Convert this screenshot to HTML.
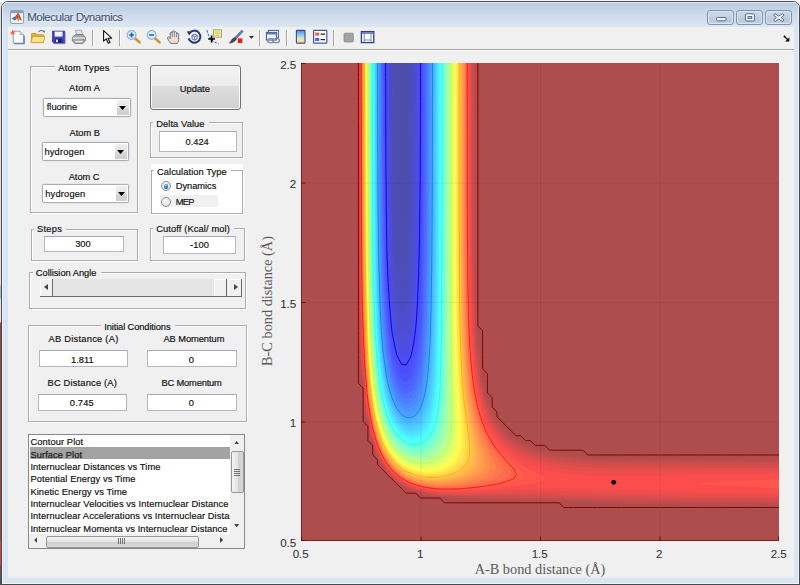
<!DOCTYPE html>
<html><head><meta charset="utf-8"><title>Molecular Dynamics</title>
<style>
html,body{margin:0;padding:0}
body{width:800px;height:585px;overflow:hidden;background:#e9e9ec;font-family:"Liberation Sans",sans-serif;position:relative}
#out{position:absolute;left:0;top:0;width:800px;height:585px;background:linear-gradient(#f4f4f6 0,#f4f4f6 2px,#e2e3e8 2px,#e2e3e8 284px,#a9b8d0 286px,#a9b8d0 298px,#e6e6ea 300px,#e6e6ea 322px,#9e4448 323px,#9e4448 540px,#dc4242 542px,#dc4242 564px,#6a5054 568px,#555 585px)}
#topbg{position:absolute;left:2px;top:0;width:798px;height:3px;background:#f6f6f8}
#botbg{position:absolute;left:0;top:583px;width:800px;height:2px;background:#4e4e50}
#win{position:absolute;left:1px;top:1px;width:797px;height:582px;border:1px solid #48484c;border-radius:7px 7px 0 0;background:#d9e5f2;box-shadow:inset 0 0 0 1px #eef4fb;overflow:hidden}
#cap{position:absolute;left:0;top:0;width:797px;height:24.5px;background:linear-gradient(#b9cae0 0,#c6d5e8 35%,#d4e0ef 70%,#dbe6f3 100%);box-shadow:inset 0 1px 0 #e6eef8,inset 1px 0 0 #e6eef8,inset -1px 0 0 #e6eef8}
#client{position:absolute;left:6px;top:24.5px;width:786px;height:551.5px;background:#f0f0f0}
#tbline{position:absolute;left:6px;top:47px;width:786px;height:1px;background:#a8a8a8;box-shadow:0 1px 0 #fafafa}
.t{position:absolute;white-space:nowrap;-webkit-text-stroke:.18px currentColor}
.pn{position:absolute;border:1px solid #adadad;box-shadow:1px 1px 0 #fff,inset 1px 1px 0 #fff}
.ed{position:absolute;background:#fff;border:1px solid #b4b8c0;border-top-color:#a6aab4}
.cb{position:absolute;background:#fff;border:1px solid #a9adb6;border-radius:1.5px;box-shadow:0 0 0 .5px #dcdde0}
.cbb{position:absolute;right:1px;top:1px;bottom:1px;width:11.5px;background:linear-gradient(#f0f0f0,#e4e4e4 50%,#d8d8d8 51%,#cecece)}
.cba{position:absolute;right:3.2px;top:7.2px}
.btn{position:absolute;border:1px solid #707070;border-radius:3px;background:linear-gradient(#f3f3f3 0,#ececec 46%,#dedede 47%,#d0d0d0 100%);box-shadow:inset 0 0 0 1px #fafafa}
.rd{position:absolute;width:9px;height:9px;border-radius:50%;border:1px solid #8a8f98;background:radial-gradient(circle at 40% 35%,#fdfdfd 0,#e4e6e8 60%,#c9ccd0 100%);box-sizing:border-box;width:10.4px;height:10.4px}
.rd i{position:absolute;left:2.1px;top:2.1px;width:4.6px;height:4.6px;border-radius:50%;background:radial-gradient(circle at 40% 30%,#7fd0f2 0,#1c78b8 55%,#0c3a66 100%)}
.sl{position:absolute;background:#e4e4e4;border-bottom:1.2px solid #6a6a6a;box-sizing:border-box}
.slb{position:absolute;top:0;height:16.7px;background:#f0f0f0;border-right:1px solid #6a6a6a;box-shadow:inset 1px 1px 0 #fff;box-sizing:border-box}
.lb{position:absolute;background:#fff;border:1px solid #828790}
.thumb{position:absolute;border:1px solid #979797;border-radius:2px;background:linear-gradient(90deg,#f4f4f4,#e3e3e3 50%,#cfcfcf 51%,#d8d8d8)}
.thumbh{position:absolute;border:1px solid #979797;border-radius:2px;background:linear-gradient(#f4f4f4,#e3e3e3 50%,#cfcfcf 51%,#d8d8d8)}
.tk{font-size:11.6px;line-height:13px;color:#2e2e2e;-webkit-text-stroke:.05px currentColor}
.ax{font-family:"Liberation Serif",serif;font-size:14.3px;line-height:16px;color:#5a5a5a;-webkit-text-stroke:0}
.cbt{position:absolute;top:7.9px;height:12.9px;border:1px solid #8093b2;border-radius:3px;background:linear-gradient(#ccd9ea 0,#c3d1e5 48%,#b9c9df 52%,#c2d0e4 100%);box-shadow:inset 0 0 0 1px #dbe5f2}
.sep{position:absolute;top:30px;width:1px;height:16px;background:#a6a6a6;box-shadow:1px 0 0 #fbfbfb}
.ic{position:absolute;top:29px}
</style></head><body>
<div id="out"></div><div id="topbg"></div><div id="botbg"></div>
<div id="win">
<div id="cap"></div>
<!-- app icon -->
<svg style="position:absolute;left:7.7px;top:7.7px" width="14" height="14" viewBox="0 0 14 14">
<rect x=".5" y=".5" width="13" height="13" rx="1.5" fill="#f4f6f8" stroke="#93a0b2"/>
<rect x="1" y="1" width="12" height="2.2" fill="#7f9fc4"/>
<path d="M1.6,8.6L5.2,6.2 7.2,8.8 4.6,10.6Z" fill="#3f78b8"/>
<path d="M5.2,6.2L8.4,2.6 9.6,5.5 11.8,10.8 9.6,9.2 8.2,11.4 7.2,8.8Z" fill="#d8501c"/>
<path d="M8.4,2.6L9.6,5.5 11.8,10.8 10.3,8.4Z" fill="#8a2a10"/>
<path d="M7.2,8.8L8.2,11.4 9.6,9.2 8.6,7.3Z" fill="#f2a23c"/>
</svg>
<span class="t" id="t_title" style="left:25.2px;top:7.2px;font-size:11.6px;line-height:16px;color:#46506a;letter-spacing:-0.5px;-webkit-text-stroke:.06px currentColor;text-shadow:0 0 3px #f4f8fc">Molecular Dynamics</span>
<!-- caption buttons -->
<div class="cbt" style="left:704.5px;width:25.5px"><svg width="26" height="14" style="position:absolute;left:0;top:0"><rect x="8.6" y="6.6" width="9.4" height="3.2" rx="1" fill="#fff" stroke="#55637a" stroke-width="1"/></svg></div>
<div class="cbt" style="left:733.8px;width:25.2px"><svg width="26" height="14" style="position:absolute;left:0;top:0"><rect x="8.4" y="2.8" width="9" height="7.2" rx="1" fill="#fff" stroke="#55637a" stroke-width="1"/><rect x="11" y="5.4" width="3.8" height="2.2" fill="#b6c5db" stroke="#55637a" stroke-width=".9"/></svg></div>
<div class="cbt" style="left:763px;width:25.3px"><svg width="26" height="14" style="position:absolute;left:0;top:0"><path d="M9,2.6L12.8,5.2 16.6,2.6 18,4.2 15,6.6 18,9 16.6,10.6 12.8,8 9,10.6 7.6,9 10.6,6.6 7.6,4.2Z" fill="#fff" stroke="#55637a" stroke-width="1" stroke-linejoin="round"/></svg></div>
<div id="client"></div>
<div id="tbline"></div>
</div>
<!-- ===== toolbar icons (page coordinates) ===== -->
<svg class="ic" style="left:9px" width="18" height="16" viewBox="0 0 18 16"><!-- new -->
<path d="M4.2,2.2H11L14.6,5.6V14.2H4.2Z" fill="#fdfeff" stroke="#8aa0d0" stroke-width="1"/>
<path d="M5,14.8H15.2V6.4" fill="none" stroke="#5a6fb4" stroke-width="1.1"/>
<path d="M11,2.2V5.6H14.6" fill="#dfe8f6" stroke="#8aa0d0" stroke-width=".8"/>
<path d="M3.6,.6L4.3,2.5 6.3,1.6 5.1,3.5 6.8,4.6 4.8,4.7 4.6,6.7 3.5,5 1.6,6 2.5,4.1 .8,3.1 2.8,2.8Z" fill="#f0682c"/>
</svg>
<svg class="ic" style="left:30px" width="18" height="16" viewBox="0 0 18 16"><!-- open -->
<path d="M8.5,2.8C10,1 12.6,1 14,2.8" fill="none" stroke="#4a6ca8" stroke-width="1.1"/><path d="M12.6,1.2L15,2 14.2,4.2Z" fill="#4a6ca8"/>
<path d="M1.6,4.6H6L7.2,5.8H13.4V13.4H1.6Z" fill="#e4b53c" stroke="#b98a20" stroke-width=".8"/>
<path d="M.8,13.6L2.6,7.4H15L13.2,13.6Z" fill="#fbe38a" stroke="#c89c2a" stroke-width=".8"/>
</svg>
<svg class="ic" style="left:51px" width="18" height="16" viewBox="0 0 18 16"><!-- save -->
<path d="M1.6,2.2H13.6V14.2H2.8L1.6,13Z" fill="#3f3fc0" stroke="#28287e" stroke-width=".8"/>
<rect x="3.6" y="2.6" width="8" height="5" fill="#f2f4fb"/>
<rect x="4.4" y="9.8" width="6.4" height="4" fill="#22225a"/><rect x="5" y="10.6" width="2" height="2.6" fill="#e8e8f4"/>
<path d="M14.2,3V14.8H3.4" fill="none" stroke="#8d8dd8" stroke-width=".8"/>
</svg>
<svg class="ic" style="left:71px" width="18" height="16" viewBox="0 0 18 16"><!-- print -->
<path d="M4.4,1.2H10.2L11.6,6H5.6Z" fill="#cfe6fb" stroke="#7d97b8" stroke-width=".7"/>
<path d="M1.4,8.2L4.6,5.6H12L14.4,8.2V12L11.6,14.6H4.2L1.4,12Z" fill="#a9a9a9" stroke="#6f6f6f" stroke-width=".8"/>
<path d="M1.8,8.4H14V9.8H1.8Z" fill="#e6e6e6"/>
<path d="M3.2,11.4H12.6L11.2,13.8H4.6Z" fill="#f4f4f4" stroke="#8a8a8a" stroke-width=".6"/>
<rect x="11.4" y="10" width="1.4" height="1" fill="#3ea43e"/>
</svg>
<div class="sep" style="left:92px"></div>
<svg class="ic" style="left:101px" width="14" height="16" viewBox="0 0 14 16"><!-- pointer -->
<path d="M2.6,1.6V12.2L5.2,9.8 7.2,14.2 9,13.4 7,9.2H10.6Z" fill="#fff" stroke="#111" stroke-width="1.1" stroke-linejoin="round"/>
</svg>
<div class="sep" style="left:119px"></div>
<svg class="ic" style="left:124.5px" width="18" height="16" viewBox="0 0 18 16"><!-- zoom in -->
<path d="M9.2,8.6L14.6,13.4" stroke="#d98a2c" stroke-width="2.6" stroke-linecap="round"/>
<circle cx="6.6" cy="6" r="4.4" fill="#d6ecfb" stroke="#8fb2d6" stroke-width="1.2"/>
<path d="M4.2,6H9M6.6,3.6V8.4" stroke="#2c5ea8" stroke-width="1.5"/>
</svg>
<svg class="ic" style="left:145px" width="18" height="16" viewBox="0 0 18 16"><!-- zoom out -->
<path d="M9.2,8.6L14.6,13.4" stroke="#d98a2c" stroke-width="2.6" stroke-linecap="round"/>
<circle cx="6.6" cy="6" r="4.4" fill="#d6ecfb" stroke="#8fb2d6" stroke-width="1.2"/>
<path d="M4.2,6H9" stroke="#2c5ea8" stroke-width="1.5"/>
</svg>
<svg class="ic" style="left:165.5px" width="18" height="16" viewBox="0 0 18 16"><!-- pan -->
<path d="M4.6,14.4C3,12 1.6,10.2 1.4,8.6C1.8,7.4 3.2,8 4.2,9.6V4.2C4.4,2.8 6,2.8 6.2,4.2V2.8C6.4,1.4 8.2,1.4 8.4,2.8V3.6C8.6,2.2 10.4,2.4 10.6,3.8V5C10.9,3.8 12.6,4 12.7,5.4V10C12.6,12 12,13 11.4,14.4Z" fill="#f8dcc0" stroke="#4a6aa4" stroke-width=".9" stroke-linejoin="round"/>
<path d="M6.2,4.4V8M8.4,3.8V8M10.6,5V8.2" stroke="#4a6aa4" stroke-width=".7"/>
</svg>
<svg class="ic" style="left:186px" width="18" height="16" viewBox="0 0 18 16"><!-- rotate -->
<path d="M3.4,4.2A6,6 0 1 1 2.6,9.4" fill="none" stroke="#27396e" stroke-width="2"/>
<path d="M.8,2.2L6,2.6 3,6.6Z" fill="#27396e"/>
<path d="M6,6.4L8.6,5.2 11.2,6.4V9.8L8.6,11.2 6,9.8Z" fill="#e9eef8" stroke="#3a4e86" stroke-width=".8"/><path d="M6,6.4L8.6,7.6 11.2,6.4M8.6,7.6V11.2" fill="none" stroke="#3a4e86" stroke-width=".7"/>
</svg>
<svg class="ic" style="left:205.5px" width="18" height="16" viewBox="0 0 18 16"><!-- datacursor -->
<rect x="7.4" y=".8" width="8.2" height="7.4" fill="#f2eaa0" stroke="#a9a05a" stroke-width=".9"/>
<path d="M9,3H14M9,4.8H14M9,6.4H13" stroke="#c8c07a" stroke-width=".7"/>
<path d="M1,1.2C2.4,8.4 6.4,13 12.6,14.6" fill="none" stroke="#3a3ae0" stroke-width=".9" stroke-dasharray="2.4 1.2"/>
<path d="M5.6,6.6V13.4M2.2,10H9" stroke="#000" stroke-width="1.7"/>
</svg>
<svg class="ic" style="left:227.5px" width="18" height="16" viewBox="0 0 18 16"><!-- brush -->
<path d="M13.6,1.2L15.2,2.4 8.4,9.8 6.8,8.6Z" fill="#5f86c8" stroke="#36508c" stroke-width=".6"/>
<path d="M6.8,8.6L8.4,9.8C7.6,12.4 4.4,13.8 1.4,14.2C3.2,12.6 3.4,9.6 6.8,8.6Z" fill="#4a4a4a" stroke="#222" stroke-width=".5"/>
<rect x="9.8" y="9.4" width="4.6" height="4.6" fill="#f01818"/>
</svg>
<svg class="ic" style="left:249px;top:36px" width="5" height="3" viewBox="0 0 5 3"><path d="M0,0H5L2.5,2.8Z" fill="#222"/></svg>
<div class="sep" style="left:258.6px"></div>
<svg class="ic" style="left:264.5px" width="18" height="16" viewBox="0 0 18 16"><!-- link -->
<rect x="3.4" y="1.4" width="10" height="7.6" fill="#f4f7fc" stroke="#3a5690" stroke-width="1"/>
<rect x="1.4" y="3.4" width="10" height="7.6" fill="#f4f7fc" stroke="#3a5690" stroke-width="1"/><rect x="1.9" y="3.9" width="9" height="1.6" fill="#5b7fc0"/>
<rect x="2.6" y="9.6" width="6" height="4" rx="2" fill="none" stroke="#7d8ea8" stroke-width="1.4"/>
<rect x="8" y="9.6" width="6.4" height="4" rx="2" fill="none" stroke="#7d8ea8" stroke-width="1.4"/>
</svg>
<div class="sep" style="left:286px"></div>
<svg class="ic" style="left:294.5px" width="12" height="16" viewBox="0 0 12 16"><!-- colorbar -->
<defs><linearGradient id="cbg" x1="0" y1="0" x2="0" y2="1"><stop offset="0" stop-color="#6a78e8"/><stop offset=".35" stop-color="#8ac8f4"/><stop offset=".6" stop-color="#c4ecc4"/><stop offset=".8" stop-color="#f6e6a0"/><stop offset="1" stop-color="#f4a890"/></linearGradient></defs>
<rect x="1.4" y="1.4" width="8.6" height="12.8" rx=".8" fill="url(#cbg)" stroke="#3a4a8c" stroke-width="1.1"/>
</svg>
<svg class="ic" style="left:312px" width="17" height="16" viewBox="0 0 17 16"><!-- legend -->
<rect x="1.6" y="1.4" width="13.2" height="12.8" rx=".8" fill="#fbfcff" stroke="#3f5aa0" stroke-width="1.2"/>
<rect x="3.2" y="3.6" width="4" height="3" fill="#f05a5a"/><rect x="3.2" y="9" width="4" height="3" fill="#5a5af0"/>
<path d="M8.6,5.2H13M8.6,10.6H13" stroke="#222" stroke-width="1.2"/>
</svg>
<div class="sep" style="left:333.4px"></div>
<svg class="ic" style="left:342.5px" width="12" height="16" viewBox="0 0 12 16"><rect x="1" y="4.2" width="9.4" height="8.8" rx="1" fill="#a2a2a2" stroke="#8c8c8c" stroke-width=".8"/></svg>
<svg class="ic" style="left:360px" width="16" height="16" viewBox="0 0 16 16"><!-- plottools -->
<rect x="1.4" y="2.6" width="12.4" height="11" fill="#fbfcff" stroke="#2e3f86" stroke-width="1.3"/>
<rect x="2" y="3.2" width="11.2" height="1.6" fill="#5a72b8"/>
<path d="M4.2,4.8V13M11,4.8V13M4.2,11H11" stroke="#5a6ca8" stroke-width=".8" fill="none"/>
</svg>
<svg style="position:absolute;left:783px;top:35px" width="7" height="7" viewBox="0 0 7 7"><path d="M.8,.8L5,5" stroke="#000" stroke-width="1.3"/><path d="M6.4,2.2V6.4H2.2Z" fill="#000"/></svg>
<div class="pn" style="left:30.3px;top:66.2px;width:106px;height:144.6px;"></div>
<div style="position:absolute;left:55.2px;top:63.25px;width:58.7px;height:10px;background:#f0f0f0"></div><span class="t" id="t_atomtypes" style="top:62.03px;font-size:9.3px;line-height:12px;color:#111;letter-spacing:0.253px;left:58.20px;">Atom Types</span>
<span class="t" id="t_atomA" style="top:82.38px;font-size:9.3px;line-height:12px;color:#111;letter-spacing:0.163px;left:69.10px;">Atom A</span>
<div class="cb" style="left:43px;top:97.5px;width:85.5px;height:17px"><div class="cbb"></div><svg class="cba" width="7" height="4" viewBox="0 0 7 4"><path d="M0,0H7L3.5,4Z" fill="#000"/></svg></div>
<span class="t" id="t_flu" style="top:101.48px;font-size:9.3px;line-height:12px;color:#111;letter-spacing:-0.014px;left:46.80px;">fluorine</span>
<span class="t" id="t_atomB" style="top:126.68px;font-size:9.3px;line-height:12px;color:#111;letter-spacing:-0.017px;left:69.60px;">Atom B</span>
<div class="cb" style="left:41.5px;top:141.5px;width:85px;height:17px"><div class="cbb"></div><svg class="cba" width="7" height="4" viewBox="0 0 7 4"><path d="M0,0H7L3.5,4Z" fill="#000"/></svg></div>
<span class="t" id="t_hydB" style="top:145.78px;font-size:9.3px;line-height:12px;color:#111;letter-spacing:0.188px;left:44.40px;">hydrogen</span>
<span class="t" id="t_atomC" style="top:171.38px;font-size:9.3px;line-height:12px;color:#111;letter-spacing:-0.020px;left:68.70px;">Atom C</span>
<div class="cb" style="left:42.4px;top:183.5px;width:85px;height:17.1px"><div class="cbb"></div><svg class="cba" width="7" height="4" viewBox="0 0 7 4"><path d="M0,0H7L3.5,4Z" fill="#000"/></svg></div>
<span class="t" id="t_hydC" style="top:187.98px;font-size:9.3px;line-height:12px;color:#111;letter-spacing:0.188px;left:45.20px;">hydrogen</span>
<div class="btn" style="left:150px;top:65px;width:89px;height:43px"></div>
<span class="t" id="t_update" style="top:82.78px;font-size:9.3px;line-height:12px;color:#111;letter-spacing:0.023px;left:179.80px;">Update</span>
<div class="pn" style="left:150.1px;top:122.4px;width:91.1px;height:33.8px;"></div>
<div style="position:absolute;left:153.2px;top:119.6px;width:55.8px;height:10px;background:#f0f0f0"></div><span class="t" id="t_delta" style="top:118.38px;font-size:9.3px;line-height:12px;color:#111;letter-spacing:0.093px;left:156.20px;">Delta Value</span>
<div class="ed" style="left:159px;top:131px;width:76px;height:18.5px"></div>
<span class="t" id="t_0424" style="top:135.68px;font-size:9.3px;line-height:12px;color:#111;letter-spacing:-0.016px;left:185.50px;">0.424</span>
<div style="position:absolute;left:151px;top:163.9px;width:92.4px;height:51.3px;background:#fff"></div>
<div class="pn" style="left:151.2px;top:170.2px;width:89.7px;height:42.3px;"></div>
<div style="position:absolute;left:154px;top:167px;width:77.1px;height:10px;background:#fff"></div><span class="t" id="t_calc" style="top:165.78px;font-size:9.3px;line-height:12px;color:#111;letter-spacing:0.068px;left:157.00px;">Calculation Type</span>
<div class="rd" style="left:160.7px;top:181.1px"><i></i></div>
<span class="t" id="t_dyn" style="top:180.28px;font-size:9.3px;line-height:12px;color:#111;letter-spacing:-0.016px;left:175.70px;">Dynamics</span>
<div style="position:absolute;left:159.5px;top:195px;width:58.5px;height:12px;background:#f0f0f0"></div>
<div class="rd" style="left:160.7px;top:196.6px"></div>
<span class="t" id="t_mep" style="top:195.88px;font-size:9.3px;line-height:12px;color:#111;letter-spacing:-0.700px;left:175.70px;">MEP</span>
<div class="pn" style="left:30.5px;top:229.1px;width:105.8px;height:30.2px;"></div>
<div style="position:absolute;left:34px;top:224.5px;width:32.3px;height:10px;background:#f0f0f0"></div><span class="t" id="t_steps" style="top:223.28px;font-size:9.3px;line-height:12px;color:#111;letter-spacing:0.255px;left:37.00px;">Steps</span>
<div class="ed" style="left:44px;top:235.8px;width:77.5px;height:14.2px"></div>
<span class="t" id="t_300" style="top:238.28px;font-size:9.3px;line-height:12px;color:#111;letter-spacing:-0.008px;left:75.20px;">300</span>
<div class="pn" style="left:150.1px;top:227.7px;width:93.2px;height:31.5px;"></div>
<div style="position:absolute;left:153.2px;top:224.2px;width:81.2px;height:10px;background:#f0f0f0"></div><span class="t" id="t_cutoff" style="top:222.98px;font-size:9.3px;line-height:12px;color:#111;letter-spacing:0.120px;left:156.20px;">Cutoff (Kcal/ mol)</span>
<div class="ed" style="left:163.2px;top:236.3px;width:71px;height:16.2px"></div>
<span class="t" id="t_m100" style="top:239.28px;font-size:9.3px;line-height:12px;color:#111;letter-spacing:0.130px;left:190.00px;">-100</span>
<div class="pn" style="left:28.9px;top:271.6px;width:215.3px;height:35.2px;"></div>
<div style="position:absolute;left:32.8px;top:267.9px;width:68.1px;height:10px;background:#f0f0f0"></div><span class="t" id="t_coll" style="top:266.68px;font-size:9.3px;line-height:12px;color:#111;letter-spacing:-0.027px;left:35.80px;">Collision Angle</span>
<div class="sl" style="left:39.8px;top:279px;width:202.6px;height:17.8px"><div class="slb" style="left:0;width:13.5px"><svg width="4" height="6" viewBox="0 0 4 6" style="position:absolute;left:4.5px;top:5.2px"><path d="M4,0V6L0,3Z" fill="#444"/></svg></div><div class="slb" style="left:174px;width:13.5px"></div><div class="slb" style="left:188.6px;width:14px"><svg width="4" height="6" viewBox="0 0 4 6" style="position:absolute;left:5.5px;top:5.2px"><path d="M0,0V6L4,3Z" fill="#444"/></svg></div></div>
<div class="pn" style="left:27.8px;top:325.4px;width:217.7px;height:95.1px;"></div>
<div style="position:absolute;left:101.2px;top:322.1px;width:73.9px;height:10px;background:#f0f0f0"></div><span class="t" id="t_init" style="top:320.88px;font-size:9.3px;line-height:12px;color:#111;letter-spacing:-0.107px;left:104.20px;">Initial Conditions</span>
<span class="t" id="t_abd" style="top:332.88px;font-size:9.3px;line-height:12px;color:#111;letter-spacing:0.261px;left:48.50px;">AB Distance (A)</span>
<span class="t" id="t_abm" style="top:332.88px;font-size:9.3px;line-height:12px;color:#111;letter-spacing:-0.048px;left:163.40px;">AB Momentum</span>
<div class="ed" style="left:39px;top:350.4px;width:87px;height:14.4px"></div>
<span class="t" id="t_1811" style="top:353.58px;font-size:9.3px;line-height:12px;color:#111;letter-spacing:0.005px;left:71.10px;">1.811</span>
<div class="ed" style="left:147.3px;top:350.4px;width:87.4px;height:14.4px"></div>
<span class="t" id="t_0a" style="top:353.58px;font-size:9.3px;line-height:12px;color:#111;left:91.40px;width:200px;text-align:center;">0</span>
<span class="t" id="t_bcd" style="top:376.98px;font-size:9.3px;line-height:12px;color:#111;letter-spacing:0.189px;left:47.50px;">BC Distance (A)</span>
<span class="t" id="t_bcm" style="top:376.98px;font-size:9.3px;line-height:12px;color:#111;letter-spacing:-0.170px;left:161.50px;">BC Momentum</span>
<div class="ed" style="left:38px;top:393.7px;width:87px;height:15.2px"></div>
<span class="t" id="t_0745" style="top:396.78px;font-size:9.3px;line-height:12px;color:#111;letter-spacing:0.159px;left:69.80px;">0.745</span>
<div class="ed" style="left:147.3px;top:393.7px;width:87.4px;height:15.2px"></div>
<span class="t" id="t_0b" style="top:396.78px;font-size:9.3px;line-height:12px;color:#111;left:91.40px;width:200px;text-align:center;">0</span>
<div class="lb" style="left:28px;top:434px;width:215px;height:113px">
<div style="position:absolute;left:1px;top:12.3px;width:200.5px;height:12.2px;background:#a3a3a3"></div>
</div>
<div style="position:absolute;left:29px;top:435px;width:200.5px;height:99px;overflow:hidden">
<span class="t" id="t_li0" style="left:1.4px;top:1.48px;font-size:9.3px;line-height:12px;color:#111;letter-spacing:0.100px">Contour Plot</span>
<span class="t" id="t_li1" style="left:1.4px;top:13.78px;font-size:9.3px;line-height:12px;color:#111;letter-spacing:0.100px">Surface Plot</span>
<span class="t" id="t_li2" style="left:1.4px;top:26.08px;font-size:9.3px;line-height:12px;color:#111;letter-spacing:0.100px">Internuclear Distances vs Time</span>
<span class="t" id="t_li3" style="left:1.4px;top:38.38px;font-size:9.3px;line-height:12px;color:#111;letter-spacing:0.100px">Potential Energy vs Time</span>
<span class="t" id="t_li4" style="left:1.4px;top:50.68px;font-size:9.3px;line-height:12px;color:#111;letter-spacing:0.100px">Kinetic Energy vs Time</span>
<span class="t" id="t_li5" style="left:1.4px;top:62.98px;font-size:9.3px;line-height:12px;color:#111;letter-spacing:0.100px">Internuclear Velocities vs Internuclear Distance</span>
<span class="t" id="t_li6" style="left:1.4px;top:75.28px;font-size:9.3px;line-height:12px;color:#111;letter-spacing:0.100px">Internuclear Accelerations vs Internuclear Distance</span>
<span class="t" id="t_li7" style="left:1.4px;top:87.58px;font-size:9.3px;line-height:12px;color:#111;letter-spacing:0.100px">Internuclear Momenta vs Internuclear Distance</span>
</div>
<div style="position:absolute;left:229.5px;top:435px;width:14.5px;height:112.5px;background:#f0f0f0"></div>
<div style="position:absolute;left:29px;top:534px;width:215px;height:13.5px;background:#f0f0f0"></div>
<div class="thumb" style="left:231px;top:451.2px;width:10.7px;height:40px"></div>
<svg style="position:absolute;left:234px;top:468.5px" width="6" height="7"><path d="M0,.5H6M0,2.5H6M0,4.5H6M0,6.5H6" stroke="#555" stroke-width=".8"/></svg>
<svg style="position:absolute;left:234.3px;top:441px" width="5.4" height="3.4" viewBox="0 0 6 4"><path d="M0,4H6L3,0Z" fill="#444"/></svg>
<svg style="position:absolute;left:234.3px;top:524px" width="5.4" height="3.4" viewBox="0 0 6 4"><path d="M0,0H6L3,4Z" fill="#444"/></svg>
<div class="thumbh" style="left:45.6px;top:535.5px;width:151px;height:10px"></div>
<svg style="position:absolute;left:117.5px;top:537.5px" width="7" height="6"><path d="M.5,0V6M2.5,0V6M4.5,0V6M6.5,0V6" stroke="#555" stroke-width=".8"/></svg>
<svg style="position:absolute;left:34px;top:537px" width="3.4" height="6" viewBox="0 0 4 7"><path d="M4,0V7L0,3.5Z" fill="#444"/></svg>
<svg style="position:absolute;left:220px;top:537px" width="3.4" height="6" viewBox="0 0 4 7"><path d="M0,0V7L4,3.5Z" fill="#444"/></svg>
<svg style="position:absolute;left:301px;top:63px" width="478" height="478" viewBox="0 0 478 478">
<rect x="0" y="0" width="478" height="478" fill="#ae4d4d"/>
<path d="M175,0 175.2,167 175.7,239 175.9,263 176.1,268 177,279.3 178.3,284 179.3,291 180,299 180.5,310 181,313.4 182,317.4 183,319.3 183.9,322 184.4,325 185,330 186,334.5 188.4,339 189,341 189.6,344 191,347.7 193,350.4 194.3,354 196,357 197,357.9 198.7,360 201,363.8 203,365.5 205,368.4 208,370.6 210.1,373 213.4,375 217.2,378 220,379.6 223,380.7 227,383 229,383.9 236,385.9 238.6,387 241.8,388 248,389.4 257,390.6 263,392 272,393.1 282,394 306,394.7 330,395.2 377,395.4 478,395 478,442.5 405,442.1 356,441.6 333,441 312.5,440 259,438.3 181,437.4 168,437 160,436.5 155,435.9 151.3,435 139,434.1 129,433.7 124,433.2 121,432.2 117.6,430 115,429.4 110,428.7 109,428.4 108,427.9 107,427 106.4,426 105.2,425 101,424.1 98.8,423 98,422.2 97.3,421 96.2,420 93.9,419 93,418.3 92.2,417 91.9,416 91,415.1 89,414.3 88,413.5 86.9,411 86,409.9 84,409 83.1,408 81,402.9 79,401.1 78,399.7 77,395.8 76,393.1 74,391.2 73.3,390 72.6,387 72,381.4 71,379.6 70,378.7 69,377.2 68.2,375 67.7,371 67.4,363 67,359.3 66.1,358 65,357 64.4,356 63.7,354 63.4,352 62.8,344 62.4,325 62,318.5 60.8,317 59.6,314 59.1,311 58.6,306 58.1,288 57.7,241 57.5,0 175,0Z" fill="#b94d4d"/>
<path d="M173.2,0 173.2,105 173.5,167 174.4,234 175,263 175.4,272 177,291 178.3,299 179.5,311 181,319.7 183,327 184.8,335 186,339 188.3,345 190.8,351 193.5,356 196,360.2 201,366.8 204.8,371 208,373.9 210,375.6 215,379.2 222,383.1 229,386.2 239,389.6 244,390.9 253,392.7 263,394.3 273,395.4 287,396.5 306,397.4 325,397.8 373,398.1 478,397.7 478,440.4 392,439.6 325,438.5 258,436.7 167,434.7 153,434.1 132,432.8 129,432.5 126,431.9 124,431.4 121.2,430 111,427.6 109.5,427 107,425 105,424.1 101.6,423 100.1,422 97.7,420 94,417.5 93,416 92,415 91,414.1 89,412.7 87.9,411 86,408.7 85,408 84,406.9 82.8,405 81.1,401 79.8,400 79,399 78,396.6 76.6,392 76,391 74.8,390 74,388.6 73.5,387 72.7,382 72,379.1 71,377.1 70.1,376 69.5,375 68.8,373 68.2,369 67.8,363 67,356.7 65.8,355 65,353.3 64,349 63.3,340 62.8,325 62,314.2 61,311.6 60.2,308 59.2,299 58.5,278 58.2,239 58,0 173.2,0Z" fill="#c44d4d"/>
<path d="M171.7,0 171.8,114 172,175.4 173.2,234 174,263 174.8,277 176,292 178.3,311 180.1,321 182,329.6 184.9,340 188.3,349 191.6,356 196,363.4 201,369.8 206.1,375 210,378.3 213,380.4 220.6,385 230,389.2 234,390.6 240,392.3 249,394.5 263,396.7 276,398.1 288,398.9 306,399.7 325,400.1 369,400.3 478,399.8 478,438.6 397,438 334,437 291,436 220,434.1 162,433.4 149,432.9 134,431.9 129,431.2 113,427.1 111,426.4 106,423.7 103,422.5 95,417 93,415 89.6,412 86,407.4 84,405.3 83.2,404 81.9,401 79.5,398 78.2,395 77,391.2 75,388.4 74.3,387 72,377.1 70,373.5 69.3,371 68.7,368 67.8,359 67,354.5 66.2,353 65.2,350 64.3,345 63.6,337 62.9,320 62,309.4 61.1,306 60.7,303 59.7,293 59.2,282 58.9,269 58.5,227 58.3,0 171.7,0Z" fill="#cf4d4d"/>
<path d="M170.9,0 171,129 171.3,196 172,234.4 173,263 173.9,278 175.4,296 177,309.4 178.7,320 181,331 183.8,341 187,350 191,358.5 196,366.6 201,372.8 205,376.9 208,379.5 210,381.1 215,384.5 223,388.9 229,391.4 234,393.2 239,394.7 244,396 253,397.8 263,399.3 276,400.6 291,401.6 306,402.2 325,402.5 368,402.6 478,402 478,436.8 407,436.4 349,435.6 316.2,435 239,432.7 211,432.3 163,432.4 149,432 138,431.2 134,430.9 129,430 124,429 116,427 112,425.7 103.9,422 99,418.9 96,416.8 90,411.2 84.8,405 84,403.8 82,400 79.8,397 78.9,395 77.9,392 77,390 75,386.5 72,375.5 70.4,372 69.5,369 68.1,358 67,352.2 65.6,348 64.7,343 64,335 63.3,320 62,304.2 61,298 60.3,290 59.8,280 59.4,266 58.9,223 58.6,0 170.9,0Z" fill="#db4d4d"/>
<path d="M170.1,0 170.1,129 170.5,196 171.4,244 172.1,263 173.2,282 174.5,297 176.3,312 178.5,325 180.9,336 183.6,345 187,354 191,362 196,369.9 201.1,376 205.1,380 210,384 217.6,389 225,392.7 229,394.4 233,395.8 244,398.9 253,400.7 267,402.7 277,403.7 291,404.5 306,405 325,405.3 364,405.3 478,404.6 478,435.1 426,434.7 373,433.9 239,430.7 211,430.6 163,431.3 149,431 139,430.4 129,429.1 119,427 114,425.5 110,424 105,421.7 99,418 95,414.9 89.8,410 85,404 80,395.8 77.6,390 75.6,386 74.8,384 72,373.9 70.8,371 70,368 68.5,358 67,349.9 65.7,345 64.9,340 64.4,334 63.7,320 62,298.5 61.3,293 60.7,286 60.2,275 59.8,260 59.2,216 59,143 58.9,0 170.1,0Z" fill="#e64d4d"/>
<path d="M169.2,0 169.3,129 169.6,196 170.5,244 171.2,263 172.2,282 173.5,298 175.3,313 177.2,325 179.9,337 182.4,346 186.2,356 188,360 190.6,365 195,371.8 197.4,375 201,379.2 206,384 213,389.3 221,394 230,398 234,399.4 238,400.6 249,403.4 254,404.4 262,405.5 273,406.7 287,407.8 301,408.3 316,408.6 354,408.6 478,407.5 478,432.6 416,432.1 358,431.1 311.5,430 272,428.5 249,428.1 220,428.3 176,429.9 163,430.1 148.6,430 139,429.4 129,428.2 119,426.2 115,425 110,423.1 105,420.8 99,417.1 95,414 90,409.2 85.1,403 80.3,395 75.8,385 70.9,369 70.1,366 67,347.4 65.8,342 65.2,338 62,292.2 61.1,282 60.5,270 60.1,255 59.6,211 59.3,139 59.2,0 169.2,0Z" fill="#f14d4d"/>
<path d="M168.4,0 168.4,134 168.8,201 169.2,227 169.7,249 170.5,268 171.6,287 172.9,302 174.7,317 177,330 179.5,341 182.2,350 186,359.7 188.6,365 190.8,369 195,375.4 199.5,381 204.5,386 210,390.6 215,394.2 217,395.3 225,399.7 234,403.4 239,405.1 248,407.5 254,408.9 263,410.3 282,412.3 292,412.9 306,413.2 335,413.1 426,411.5 478,410.8 478,430 435,429.3 392,428.4 344,427 277,424.7 263,424.5 249,424.6 229,425.4 166,428.7 153,429 139,428.4 129,427.3 120,425.6 114,423.8 110,422.3 106,420.5 100,417 95,413.1 90,408.2 85.9,403 80.4,394 76.1,384 74.7,380 70.7,366 66.2,341 65.5,336 62.7,297 61.4,277 60.9,265 60.4,248 60.1,224 59.7,148 59.6,0 168.4,0Z" fill="#fc4d4d"/>
<path d="M167.6,0 167.7,163 168,206 168.6,239 169.5,268 171,292 173,312 174.2,321 175.7,330 177.4,338 179.2,345 181.3,352 183.9,359 186.5,365 189.7,371 192.1,375 196,380.5 200,385.2 204.7,390 210,394.6 215,398.3 225,404.5 228.2,406 234,409.3 238.3,411 241,413.3 245.1,416 241,417.9 237,419.4 235.1,420 231,420.8 197.1,425 179,426.6 163,427.5 149,427.8 139,427.4 129,426.4 124,425.6 120,424.7 115,423.3 110,421.5 105,419.1 100,416.1 96,413 93.7,411 90,407.2 86,402.1 80.6,393 76.7,384 75.6,381 71.5,367 70.4,362 66.4,339 65.5,331 62.8,292 61.5,268 61,255 60.5,225 60.1,181 59.9,0 167.6,0ZM478,417 478,425.2 469,425 445,423.9 395.6,421 399.3,420 435,417.9 478,416.2 478,417Z" fill="#ff554d"/>
<path d="M166.7,0 166.8,153 167,196 167.5,229 168.2,258 169.3,282 170.7,301 172.5,317 173.6,325 175.2,334 176.8,341 178.3,347 180.1,353 182.1,359 185,365.9 187.5,371 190.2,376 192.8,380 196,384.6 200,389.4 205,394.8 209.4,399 213,402 215,404.1 217.5,406 220,409.2 221.9,411 221,415 220.4,416 212,419.2 209.3,420 204,421.2 183,424.3 177.6,425 166,426 157,426.5 148,426.7 139,426.4 134,426.1 125.9,425 120,423.8 115,422.4 110,420.6 105,418.2 100,415.2 95,411.3 90.7,407 86,401.1 82.9,396 81,392.6 76.8,383 75.4,379 71.7,366 70.8,362 69.2,353 66.2,334 64.3,311 62.6,282 61.3,248 60.7,216 60.4,172 60.2,0 166.7,0Z" fill="#ff604d"/>
<path d="M165.9,0 166,153 166.5,224 167,249 167.9,273 169,292 170.7,311 172.5,325 175.2,340 178.2,352 180,357.8 182,363.4 185.7,372 190,380 196,389.2 205.3,401 208.8,406 210.1,411 208,413.8 205.6,416 197.2,419 193.9,420 189.7,421 174,423.5 160,425 148,425.5 139,425.4 134,425.1 129,424.5 120,422.8 115,421.5 110,419.7 105,417.3 100,414.2 95.8,411 91,406.4 86,400 82,393.2 81,391.3 77,382 74.1,373 72,365 69.6,353 68.1,344 66.4,332 64.7,311 63.7,296 62.8,278 61.6,244 61.1,213 60.7,168 60.5,0 165.9,0Z" fill="#ff6b4d"/>
<path d="M165.1,0 165.1,148 165.6,220 166,245 166.7,268 167.7,287 169.1,306 170.7,321 172.9,335 175.6,348 178.7,359 181.5,367 185.4,376 190,385 197.3,397 199.5,401 201.4,406 201.4,407 200.7,411 198.7,413 196.1,415 194.5,416 193,416.6 188,418.3 182,420 177.5,421 171,422.1 157,423.7 149,424.2 144,424.3 134,424 129,423.5 120,421.9 115,420.6 110,418.7 105,416.4 100,413.3 96,410.2 91,405.3 86,398.8 82,392 80.1,388 77.6,382 76,377.6 73.2,368 71.7,362 70,353 68.5,344 66.7,331 65,311 63.3,282 62.2,249 61.5,215 61.1,172 60.8,0 165.1,0Z" fill="#ff764d"/>
<path d="M164.2,0 164.2,144 164.6,215 165,239 165.6,263 166.4,282 167.6,301 169,316 170.8,330 173,342.6 175.6,354 178.6,364 182.2,374 186.6,384 192.8,397 194.5,402 194.9,406 194.3,408 192.9,411 190,413.2 185.3,416 176,418.9 171.7,420 166.6,421 155,422.5 144,423.1 134,422.9 129,422.5 120,421 115,419.6 110,417.8 105,415.5 100,412.3 96,409.2 91,404.3 85.6,397 81,388.8 78.2,382 76,376 73.7,368 72,361.2 70.4,353 68.9,344 67,330 65.4,311 63.7,282 62.5,249 61.8,214 61.4,170 61.1,0 164.2,0Z" fill="#ff814d"/>
<path d="M163.4,0 163.4,143 163.7,210 164.5,258 165.3,278 166.2,296 167.4,311 168.9,325 170.8,338 173,349.3 175,357.7 177.3,366 180.7,376 187,392 188.7,397 189.5,402 189.1,406 188,408 185.9,411 183,412.9 180,414.6 176,416.4 170,418.1 164,419.6 158,420.6 153,421.3 146,421.8 139,422 134,421.8 129,421.5 124,420.8 120,420 115,418.6 110,416.9 106,415 100,411.4 96,408.2 91,403.2 90,402 86,396.6 82,389.4 80.8,387 77.2,378 75.6,373 72.9,363 71.8,358 70.1,349 68.6,339 67,326 65.7,310 64.1,282 62.8,244 62.1,206 61.7,163 61.4,0 163.4,0Z" fill="#ff8c4d"/>
<path d="M162.5,0 162.5,139 162.8,206 163.5,254 164.1,273 164.9,291 165.9,306 167.2,320 168.8,333 170.7,345 172.8,355 175.5,366 178,374.4 183.6,392 184.7,397 184.9,401 184.8,402 183.7,406 182.3,408 179.5,411 175,413.6 169.5,416 164,417.5 159,418.7 153,419.7 149,420.2 139,420.8 134,420.7 129,420.4 124,419.7 119,418.7 115,417.6 110,415.9 105,413.5 100,410.4 95.8,407 91,402.1 86,395.4 84.1,392 81,386.1 77.8,378 76,372.7 73.4,363 72,356.9 70.6,349 67.9,330 67,322.2 66.1,311 64.4,282 63.2,248 62.5,210 62.1,162 61.7,0 162.5,0Z" fill="#ff974d"/>
<path d="M161.7,0 161.7,134 161.9,201 162.5,249 163,268 163.7,287 164.5,301 165.6,315 166.9,328 168.4,339 170.2,350 172.3,360 174.7,370 179.3,387 180.4,392 180.9,397 180.7,400 180.4,402 178.7,406 176,408.9 173,411.4 169,413.4 165.1,415 162.2,416 158,417 153,418 148,418.8 139,419.5 134,419.5 129,419.2 124,418.6 119,417.7 115,416.7 110,414.9 105,412.5 100,409.3 95.8,406 91,401 86,394.1 82.1,387 79.9,382 77,374.2 75.2,368 72,354.7 71,349 68.3,330 67,318 66.4,311 64.8,282 63.6,248 62.9,210 62.4,163 62.1,0 161.7,0Z" fill="#ffa24d"/>
<path d="M160.8,0 160.8,134 161,200 161.6,248 162.5,282 163.3,297 164.2,311 165.4,325 166.7,336 168.1,346 170.1,357 176.6,387 177.3,392 177.3,397 176.6,401 176.2,402 174,406 171.9,408 169,410.3 168,411 165,412.4 161,414.1 157,415.4 153,416.4 148,417.3 139,418.1 134,418.3 129,418.1 124,417.5 120,416.9 115,415.6 110,413.8 105,411.5 100,408.3 97.1,406 95,404.1 91,399.8 85.5,392 81,383.2 79,378 77,372.5 74.7,364 72.1,353 71,346.5 68.7,330 66.7,310 65.1,282 64,248 63.2,210 62.8,162 62.4,0 160.8,0Z" fill="#ffad4d"/>
<path d="M160,0 160.1,196 160.6,244 161.4,278 162.8,306 163.7,319 164.8,330 166.1,341 167.7,352 173.2,382 173.9,387 174.2,392 174,396 173.9,397 172.7,401 171.6,403 170,405.2 169,406.4 167,408 162.5,411 159,412.5 155,413.9 151,415 147,415.9 139,416.8 134,417 129,416.9 124,416.4 119,415.6 115,414.5 110,412.8 106.1,411 101,407.9 98.5,406 95,403 91,398.7 86,391.6 81.6,383 79.6,378 77,370.7 75.2,364 72.6,353 71,344 68.6,325 66.8,306 65.3,277 64.2,244 63.6,206 63.1,158 62.8,0 160,0Z" fill="#ffb94d"/>
<path d="M159.1,0 159.2,196 159.7,243 160.4,277 161.7,306 163.5,329 166,350.5 170.8,382 171.3,387 171.3,392 170.5,397 169,400.8 168.3,402 165,406 162.3,408 159,410 157,411 153,412.5 148,413.9 144,414.7 138,415.5 134,415.7 129,415.7 124,415.3 119,414.4 115,413.4 110,411.7 108.4,411 105,409.3 100,406.1 95.1,402 91,397.5 86,390.3 82,382.4 80.2,378 77,368.9 76,365.4 73.4,354 71.5,344 69,325 67,303.4 65.6,277 64.6,244 63.9,206 63.5,158 63.1,0 159.1,0Z" fill="#ffc44d"/>
<path d="M158.3,0 158.3,191 158.7,239 159.3,272 160.2,298 161.6,321 162.7,334 163.9,345 168.2,378 168.7,387 168.4,392 167.2,397 165.8,400 164.5,402 160.6,406 155.7,409 153,410.3 150,411.4 146,412.5 142,413.4 139,413.9 134,414.3 129,414.4 125,414.1 120,413.4 115,412.3 110,410.7 105,408.2 101,405.7 96,401.7 91,396.3 86,388.9 85,387 81,378.6 79,373 77,367 75,359 72.8,349 71.3,340 68.9,320 67,297.6 65.8,273 64.9,243 64.3,206 63.9,158 63.5,0 158.3,0Z" fill="#ffcf4d"/>
<path d="M157.4,0 157.5,187 157.7,234 158.3,268 159.1,296 160.4,320 162.3,342 165.7,373 166.3,382 166.2,387 165.6,392 164.4,396 163.4,398 161.6,401 160.8,402 157.6,405 155,406.8 152,408.4 148,410.1 145.2,411 141,411.9 134,412.9 129,413 124,412.8 120,412.3 115,411.2 110,409.5 105,407.1 100,403.8 96,400.5 91.9,396 90,393.6 85.7,387 81.4,378 79.6,373 77,365 76,361.3 73.4,349 71.6,339 70.4,330 68.9,316 67.1,292 66,268 65.3,243 64.6,206 64.2,158 63.9,0 157.4,0Z" fill="#ffda4d"/>
<path d="M156.6,0 156.6,186 156.8,229 157.2,263 157.8,287 158.8,311 160.4,336 163.8,373 164,382 163.7,387 162.8,392 160.8,397 158.8,400 157.1,402 154.7,404 151.9,406 149,407.4 146,408.7 143,409.7 139,410.7 133,411.5 129,411.7 124,411.5 119.6,411 115,410 110,408.3 105,406 100,402.7 96,399.3 91,393.7 90,392.3 86,386.1 82,377.7 80.2,373 77,363 76,359.1 73.9,349 72,338.7 69.8,320 67.8,296 66.7,277 65.7,244 65,206 64.6,158 64.2,0 156.6,0Z" fill="#ffe54d"/>
<path d="M155.7,0 155.7,182 155.8,225 156.2,259 156.8,287 157.7,310 159,333 161.7,368 162,377 161.8,382 161,388 160,392 159,394.4 157.6,397 156.1,399 154.4,401 152,403 147,406.1 143,407.7 139,408.9 134,409.8 132,410 129,410.3 124,410.2 120,409.8 115,408.7 110,407.1 105,404.8 100,401.5 96,398 90.7,392 86,384.6 82.9,378 80.8,373 77.6,363 76,356.9 73.6,345 72,335.5 69.8,316 67.9,292 66.9,272 65.9,239 65.3,201 64.9,153 64.6,0 155.7,0Z" fill="#fff04d"/>
<path d="M154.8,0 154.8,177 155.2,254 155.6,280 156.3,302 157.4,327 159.7,364 160,373 159.8,380 159.5,383 158.8,387 157.3,392 154.5,397 152,399.8 150,401.6 148,403 144,405.2 139,407.1 134,408.2 132,408.4 129,408.8 124,408.8 120,408.4 115,407.5 110,405.9 105,403.5 100,400.2 96,396.8 91,391 85.9,383 81.5,373 79.8,368 77,358.7 75.9,354 73.9,344 72,332.1 70.1,315 68.3,291 67,265.4 66.3,239 65.7,201 65.3,153 65,0 154.8,0Z" fill="#fffb4d"/>
<path d="M154,0 153.9,177 154.2,249 154.7,281 155.4,306 156.1,325 158.1,363 158.1,372 157.9,378 157.4,382 156.4,387 154.5,392 153,394.6 151.3,397 149,399.3 146.9,401 144,402.8 141,404.3 138,405.4 134,406.5 129,407.2 124,407.4 120,407.1 115,406.2 110,404.6 105,402.3 101,399.7 96,395.4 93,392 91,389.6 86.8,383 86,381.6 84.4,378 81,369.9 77.4,358 76,352.1 74.6,345 72,328.5 70.2,311 68.5,287 67.2,258 66.5,234 66,198.4 65.6,153 65.3,0 154,0Z" fill="#f8ff54"/>
<path d="M153.1,0 153,172 153.2,244 153.6,275 154.2,301 156.4,359 156.4,368 156.1,375 155.2,382 153.5,388 152,391.5 151.1,393 148.9,396 146.9,398 144,400.3 141.1,402 138,403.4 134,404.7 129,405.6 124,405.9 120,405.7 115,404.8 110,403.3 105,401 100,397.6 96,394.1 94.1,392 91,388.2 87.2,382 85.1,378 81,368.1 77,354 75.9,349 74.3,340 72,325 70.2,306 68.9,287 67.8,263 66.9,234 66.3,196 66,151.6 65.7,0 153.1,0Z" fill="#edff5f"/>
<path d="M152.2,0 152.1,172 152.3,239 153,296 154.7,354 154.8,364 154.4,373 153.8,378 153,382 151.5,387 148.9,392 147,394.5 144.6,397 142,398.9 139,400.8 134,402.8 129,403.9 124,404.3 120,404.2 115,403.5 110,402 105,399.7 101,397.1 96,392.7 95,391.6 91,386.7 88.7,383 86,378.3 83.7,373 81,366 79,359 77,351.5 76,346.8 74,335 72.6,325 71.5,316 70.7,306 69.1,282 67.9,254 67.1,224 66.7,191 66.3,144 66.1,0 152.2,0Z" fill="#e1ff6a"/>
<path d="M151.4,0 151.3,235 151.9,291 153.2,349 153.3,359 152.9,368 152.5,373 151.9,377 150.5,383 149,387 148,388.9 146,392 144,394.3 142,396.2 139.5,398 134,400.8 129,402.2 124,402.7 120,402.7 115,402.1 110,400.6 105,398.3 103,397 100,394.9 96,391.3 91,385.2 89.7,383 86,376.6 82.5,368 80.7,363 78,353 76,344 73.1,325 72,316.1 71.1,306 69.8,286 68.5,258 67.6,225 67,188.2 66.7,149 66.4,0 151.4,0Z" fill="#d6ff75"/>
<path d="M150.5,0 150.4,239 150.8,287 151.8,349 151.7,359 151.2,368 150.6,373 150,376.4 148.5,382 146.4,387 143,392.1 140,394.9 138,396.4 135.2,398 133,399 129,400.3 125,401 119,401.1 115,400.6 110,399.2 105,396.9 100,393.5 96,389.8 91,383.6 90,382 86,374.8 83.2,368 81,361.8 78.7,353 76.6,344 75,335 73.6,325 72,311 70.2,287 68.9,258 68,225 67.4,187 67.1,143 66.8,0 150.5,0Z" fill="#cbff80"/>
<path d="M149.6,0 149.5,234 149.7,282 150.4,344 150.3,354 149.9,363 149.4,368 148.7,373 147.3,379 145.8,383 144,386.7 141,390.8 139,392.9 137,394.4 134,396.3 132,397.2 129,398.3 125,399.2 119,399.4 115,399 110,397.7 105,395.4 100,392 96,388.3 91,382 86,373 82.1,363 81,359.6 77,343.2 75.6,335 74.2,325 72,305.9 70.7,287 69.4,259 68.6,229 67.9,192 67.6,148 67.2,0 149.6,0Z" fill="#c0ff8b"/>
<path d="M148.7,0 148.5,230 149.1,335 149,349 148.5,359 147.6,368 146.8,373 145.7,377 144,382 141,387.2 139,389.7 136.6,392 134,393.8 131,395.4 129,396.3 125,397.3 119,397.8 115,397.4 110,396.2 105,393.9 100,390.5 96.3,387 91,380.3 86,371.1 82.9,363 81,357.2 79,349 77,340.1 76,334.4 74.7,325 72.5,306 71.1,287 69.8,259 69,229 68.4,192 68,148 67.6,0 148.7,0Z" fill="#b5ff97"/>
<path d="M147.8,0 147.6,229 147.9,330 147.7,345 147,358 145.8,368 144.8,373 144,375.9 143,378.8 141.5,382 138.4,387 134,391.2 132,392.5 129,394 124,395.6 120,396 115,395.8 110,394.6 105,392.4 100,388.9 96,385.1 94.3,383 91,378.5 88,373 85.6,368 82.3,359 80.8,354 77,336.8 75.9,330 74.6,320 72.6,301 71.3,282 70.3,258 69.4,225 68.8,187 68.4,143 68.1,0 147.8,0Z" fill="#aaffa2"/>
<path d="M146.9,0 146.6,225 146.7,320 146.4,340 145.8,354 144.7,364 144,368 142.8,373 141.5,377 140.1,380 139,382.2 137,385 134,388.3 131,390.5 128.5,392 125,393.3 122,393.9 119,394.2 115,394 110,393 106,391.2 105,390.8 100,387.3 95,382.2 91,376.7 90,374.9 86,367 82.8,358 81,352.2 79.1,344 77.1,334 75.1,320 73.2,301 71.8,282 70.7,258 69.8,225 69.2,187 68.9,143 68.5,0 146.9,0Z" fill="#9fffad"/>
<path d="M146,0 145.5,311 145.2,335 144.9,344 144.3,353 143.1,363 142.2,368 141.1,372 138.8,378 135.8,383 134,385.1 132,387 129,389.2 126,390.6 124,391.4 120,392.3 115,392.3 110,391.3 105,389.1 101,386.4 96,381.7 91,374.8 90,373 86,364.9 82.3,354 81,349.5 77.8,334 77,329.7 75.7,320 73.7,301 72,277.6 71,254 70.2,225 69.7,187 69.3,143 69,0 146,0Z" fill="#94ffb8"/>
<path d="M145,0 144.5,299 144.1,330 143.7,340 143.2,349 142,359 140.3,368 139,372.1 138,374.7 136.4,378 134.5,381 132.9,383 129,386.6 125,388.7 124,389.1 120,390.2 115,390.4 110,389.5 105,387.4 101,384.7 100,383.9 96,379.9 91,372.9 86,362.7 81.6,349 80.4,344 78.4,334 77,325.7 76,318.4 73.8,296 72.3,273 71.4,253 70.7,225 70.1,187 69.8,143 69.4,0 145,0Z" fill="#89ffc3"/>
<path d="M144.1,0 143.9,158 143.5,286 143,322 142.6,334 142.1,344 141.1,354 140.3,359 139.4,364 138.3,368 136.9,372 134,377.9 131.6,381 129.7,383 128.5,384 125,386.3 123.5,387 120,388 115,388.4 110,387.7 109,387.3 105,385.6 101,382.9 100,382.1 96,378 91,370.9 86,360.3 82.4,349 81.1,344 78.2,329 77,321.4 76,313.5 74.1,292 72.8,272 71.9,253 71,220 70.6,186 70.2,139 69.9,0 144.1,0Z" fill="#7dffce"/>
<path d="M143.2,0 143,158 142.5,272 142,315 141.5,330 140.9,340 140.1,349 138.6,359 137.8,363 136.3,368 134,373.5 131.9,377 130,379.4 128.5,381 125.9,383 124,384.2 120,385.8 115,386.4 110,385.7 105,383.7 101,381 100,380.2 96,376.1 93.8,373 90.6,368 86,357.9 81.9,344 80.9,340 79.1,330 77.5,320 76.3,311 74.6,292 73.3,272 72.1,244 71.5,220 71,185.4 70.7,143 70.3,0 143.2,0Z" fill="#72ffd9"/>
<path d="M142.2,0 142,158 141.5,264 140.9,311 140.4,325 139.6,339 138.6,349 136.8,359 135.8,363 134.2,368 131.8,373 129,377.2 127,379.1 124,381.5 120.9,383 119,383.7 115,384.2 114,384.2 110,383.7 106,382.2 105,381.8 101,379.1 100,378.3 96,374.1 91,366.6 86,355.3 82,341.3 81,337.1 79.7,330 76.9,311 75.5,296 73.9,272 72.8,248 72,220 71.4,182 71.1,139 70.8,0 142.2,0Z" fill="#67ffe4"/>
<path d="M141.3,0 141,153 140.6,254 139.8,306 139.3,321 138.6,334 137.6,344 136.1,354 134,362.8 131.5,369 129,373.4 125.8,377 124,378.6 120,380.8 119,381.2 115,382 114,382 110,381.7 106,380.2 105,379.8 101,377.1 100,376.2 96,372 91,364.3 86,352.6 82,338 81,333.5 79.6,325 77,306.3 75.3,287 74,263 73.1,239 72.3,206 71.6,133 71.3,0 141.3,0Z" fill="#5cffef"/>
<path d="M140.3,0 140,157 139.5,253 138.8,301 138.1,320 137.3,332 136.1,344 134.4,354 133.2,359 131.8,363 129,369.2 127,372.1 125,374.5 123.3,376 120,378.2 119,378.6 115,379.6 110,379.4 105,377.7 100,374.1 96,369.8 95,368.4 91,361.9 89.3,358 86,349.8 81.9,334 81,329.7 79.5,320 77,300.1 75.6,282 74.4,259 73.5,234 72.8,205 72.3,168 72,125.4 71.7,0 140.3,0Z" fill="#51fffb"/>
<path d="M139.4,0 139.1,153 138.6,244 137.7,296 137,315 136.2,329 135.1,340 133.7,349 132.6,354 131.5,358 129.7,363 128.8,365 127.1,368 124.1,372 120,375.2 119,375.8 115,377.1 110,377.2 105,375.4 100,371.9 96,367.5 95,366.1 91,359.4 88.7,354 86,346.8 81.9,330 81,325.5 79.6,316 77.3,296 76,280 74.9,258 73.9,230 73.3,201 72.6,125 72.3,0 139.4,0Z" fill="#4df8ff"/>
<path d="M138.4,0 138.1,148 137.6,239 136.6,292 135.9,311 135.1,325 133.8,338 132,348.6 130.7,354 129.5,358 127.3,363 124,368.4 120,372.2 118.6,373 115,374.5 110,374.7 105,373.2 100,369.6 96,365.1 95,363.7 91,356.8 89.8,354 86,343.7 82,326.4 81,321 80.2,315 78,296 76.8,282 75.7,263 74.6,235 73.9,205 73.2,129 72.8,0 138.4,0Z" fill="#4dedff"/>
<path d="M137.4,0 137.1,143 136.6,230 135.6,286 134.9,306 134.1,320 132.7,334 131.2,344 129,353.3 126.8,359 125,362.7 124,364.3 120,368.8 119,369.6 115,371.6 110,372.2 105,370.7 101,368 100,367.2 96,362.6 91,354 86,340.3 83.6,330 81,316.2 78.7,296 77,277 76,258.2 75.2,234 74.5,205 73.7,129 73.4,0 137.4,0Z" fill="#4de2ff"/>
<path d="M136.3,0 136.1,139 135.6,225 135.1,258 134.6,282 134,300 133.1,315 131.7,330 130.1,341 128.2,349 126.6,354 125.4,357 124,359.9 122.6,362 120.2,365 119,366.1 115,368.6 110,369.5 105,368.2 100,364.6 95.4,359 91,351.1 88.4,344 86,336.7 84.5,330 82.5,320 81,311 79.4,296 77.8,277 76.6,258 75.9,239 75.1,206 74.3,129 74,0 136.3,0Z" fill="#4dd7ff"/>
<path d="M135.3,0 135.1,139 134.5,224 134.1,254 133.6,277 132.8,296 132,311 130.8,325 129,337.7 127.3,345 126.2,349 124.8,353 124,354.9 122.3,358 120,361.3 119,362.4 115,365.4 110,366.6 105,365.4 101,362.8 100,361.9 96,357.2 94.1,354 91,348 86.6,335 85.4,330 82,311.9 81,304.9 80.1,296 78.5,277 77.1,254 76.3,234 75.7,210 75.2,177 74.9,133 74.5,0 135.3,0Z" fill="#4dccff"/>
<path d="M134.3,0 134,134 133.5,215 132.6,268 131.9,288 131,306 129.8,320 128.6,330 126.7,340 125.7,344 124.1,349 121.8,354 120,357 119,358.4 115,361.9 114,362.4 110,363.6 105,362.6 100,359.1 95.8,354 91,344.7 89.1,339 86,328.7 82.8,311 80.8,296 79.2,277 77.8,253 77,234 76.1,201 75.4,125 75.1,0 134.3,0Z" fill="#4dc1ff"/>
<path d="M133.2,0 133,129 132.4,210 131.5,263 130.9,282 129.9,301 129,313.6 127.6,325 125.9,335 125,339.2 123.6,344 121.6,349 120,352.3 118.9,354 115,358.2 113.5,359 110,360.3 105,359.6 101,356.9 100,356.1 96,351.1 94.8,349 91,341.2 88.7,334 86,324.3 82.9,306 81,290.9 79.6,272 78.3,249 77.4,225 76.8,201 76,130 75.7,0 133.2,0Z" fill="#4db6ff"/>
<path d="M132.1,0 131.9,124 131.3,205 130.4,258 129.8,277 129,294.8 127.8,310 126.5,321 125,330.7 124,335.3 123,339 121.3,344 120,347 119,349 118,350.4 115,354.2 114,354.9 110,356.8 105,356.3 101,353.8 100,352.9 96,347.8 94,344 91,337.4 88.8,330 86,319.4 83.1,301 81,282.4 79.7,263 78.6,239 77.8,215 77.2,186 76.6,115 76.3,0 132.1,0Z" fill="#4dabff"/>
<path d="M131,0 130.8,129 130.2,210 129.1,263 128.3,282 127.5,296 126.2,311 124.3,325 122.2,334 120,341.1 118.7,344 117,346.8 115,349.7 114,350.6 110,353.1 106,353 105,352.9 101,350.4 99.6,349 95.8,344 91,333.4 88.6,325 86,314.1 82.9,292 81.1,273 80,254 79.1,234 78.4,210 77.9,181 77.2,110 76.9,0 131,0Z" fill="#4d9fff"/>
<path d="M129.9,0 129.6,129 129.1,206 128.6,234 127.9,258 127.2,277 126.3,292 125.1,306 123.9,316 122.7,323 121.4,329 120,334.3 119,337.1 117.7,340 115.5,344 114,345.9 110,349.1 105,349.2 101,346.7 100,345.8 96,340.4 95,338.5 91,329 88.6,320 86,308.2 83.8,291 81.9,272 80.9,258 79.9,234 79.2,210 78.6,182 78,110 77.7,0 129.9,0Z" fill="#4d94ff"/>
<path d="M128.8,0 128.5,124 127.9,201 126.8,253 126,273 125,290 124,301.9 122.7,312 121,322 119,330 116.2,337 115,339.4 114,340.8 110,344.6 105,345.2 101,342.8 100,341.9 96,336.3 95,334.4 91,324.3 88.7,315 86,301.6 83.7,282 82.1,263 81,244.7 80.5,230 79.8,206 79.3,177 78.7,110 78.4,0 128.8,0Z" fill="#4d89ff"/>
<path d="M127.6,0 127.3,115 126.7,192 125.7,244 125,265.1 124.1,282 122.9,296 121.5,308 120,317.2 119,321.7 118,325.1 115,333.3 114,335 112,337.5 110,339.8 106,340.8 105,340.9 101,338.6 100,337.7 96,331.9 95,329.8 91,319.1 88.1,306 86,294.1 84.3,278 83.1,263 82,246.6 81,224 80.1,181 79.4,110 79.2,0 127.6,0Z" fill="#4d7eff"/>
<path d="M126.4,0 126.1,114 125.6,187 124.6,239 124,255.9 123.1,273 121.7,291 120.1,305 119,311.7 116.7,321 115,326.4 114,328.5 110,334.5 107,335.6 105,336.1 101,334 100,333.1 96,327.1 95,324.9 91,313.3 88.5,301 86,285.6 84,263 82.8,244 82,226.3 80.9,186 80.2,115 79.9,0 126.4,0Z" fill="#4d73ff"/>
<path d="M125.2,0 124.9,113 124.3,186 123.3,234 121.8,268 120.8,283 119.5,296 117.9,306 115.7,316 115,318.5 114,321.1 112.1,325 110,328.5 107.4,330 105,331 101,329 100,328.1 96,321.8 95,319.4 91,306.9 89,296 86.8,282 86,275.5 85,263 83.8,244 82.9,224 82.1,201 81.6,176 81,115 80.6,0 125.2,0Z" fill="#4d68ff"/>
<path d="M123.9,0 123.6,105 123,177 122.1,225 121.5,244 120.6,263 119.6,277 118.6,287 116.9,299 115,309.1 113.1,315 110,321.8 107,324.1 105,325.2 101,323.4 100,322.5 96,316 94.3,311 91,299.7 90.3,296 88.2,282 86,263 84.8,244 83.9,224 83.2,201 82.5,172 81.8,106 81.5,0 123.9,0Z" fill="#4d5dff"/>
<path d="M122.5,0 122.2,100 121.7,168 120.8,220 120.2,239 119.5,254 118.5,268 117.2,282 115.9,292 114.5,300 112.9,306 110,314.1 107.2,317 105,318.8 101,317.2 100,316.3 96,309.4 95,306.6 93.4,301 91,291.5 90,285 87.9,268 86,247.8 84.4,210 83.4,162 82.8,96 82.5,0 122.5,0Z" fill="#4d52ff"/>
<path d="M121.1,0 120.8,100 120.3,167 119.5,211 119,227.3 118.2,244 117.4,258 116.3,272 115,283.5 114,289.5 112.3,297 110,305.1 107,309.3 105,311.5 101,310.3 100,309.4 96,302 94.3,296 91,282 90.4,277 88.3,258 86.8,239 86,226.7 85.4,210 84.3,158 83.8,95 83.5,0 121.1,0Z" fill="#4d4df9"/>
<path d="M119.7,0 119.4,91 118.9,153 118.1,201 116.8,237 115.9,253 115,264.5 114,273.1 112.6,282 110,294.4 107.1,300 106,301.8 105,303 101,302.3 100,301.4 96,293.4 95,289.9 91,270.1 89.7,258 88.2,239 87.1,220 86.2,201 85.5,167 84.8,100 84.5,0 119.7,0Z" fill="#4d4dee"/>
<path d="M118.1,0 117.8,91 117.2,153 116.3,201 115,236.4 114,250.4 113,260 111.5,272 110,281.1 107.9,287 106,291.4 105,293.1 101,292.9 100,292.1 96,283.3 95,279.3 93.6,272 91,255.5 90,243.8 88.8,224 87.2,186 86.2,138 85.8,86 85.5,0 118.1,0Z" fill="#4d4de3"/>
<path d="M116.4,0 116.1,86 115.6,148 114.9,186 113.7,220 112.1,244 110,263.9 107.7,273 106.2,278 105,281 101,281.8 100,281 96.4,272 96,271 95,266.3 93,253 91,236.1 90,219.6 88.6,182 87.7,139 87.1,81 86.8,0 116.4,0Z" fill="#4d4dd8"/>
<path d="M114.7,0 114.4,79 113.8,134 112.9,181 111.6,215 110,239.5 108.8,248 107.1,257 106,262.2 105,265.7 101,268 100,267.2 96.8,258 96,255.4 95,249.5 92.8,229 91,207.3 89.9,177 89.1,130 88.6,76 88.3,0 114.7,0Z" fill="#4d4dcd"/>
<path d="M112.5,0 112.2,72 111.7,124 111,167 110,198.4 109.1,211 108,223 106.7,234 105.5,242 105,245 101,249.8 100,249.1 99.7,248 96,234.3 95.5,230 94.8,224 93.5,206 91.9,177 91,152.1 90.5,120 90.1,67 89.8,0 112.5,0Z" fill="#4d4dc2"/>
<path d="M110.3,0 110,70.8 109.7,100 108.9,138 107.9,168 106.5,196 105,213.2 102.9,219 101,223.6 100,223.1 96,201.5 95,187.7 94.5,177 93.4,144 92.7,106 92.1,58 91.8,0 110.3,0Z" fill="#4d4db6"/>
<path d="M107,0 106.3,91 105.8,119 105,146.7 103.3,162 101.7,173 101,177.2 100,177.3 97.7,153 96,129.6 95,80.2 94.5,0 107,0Z" fill="#4d4dab"/>
<path d="M120,0V478 M0,359H478" stroke="#000" stroke-opacity=".07" stroke-width="1" fill="none"/>
<path d="M239.5,0V478 M0,239.5H478" stroke="#000" stroke-opacity=".07" stroke-width="1" fill="none"/>
<path d="M359,0V478 M0,120H478" stroke="#000" stroke-opacity=".07" stroke-width="1" fill="none"/>
<path d="M119.6,0 119.6,4.8 119.5,9.6 119.5,14.3 119.5,19.1 119.5,23.9 119.5,28.7 119.5,32.1 119.5,33.5 119.5,38.2 119.5,43 119.5,47.8 119.4,52.6 119.4,57.4 119.4,62.1 119.4,66.9 119.4,71.7 119.3,76.5 119.3,81.3 119.3,86 119.3,90.8 119.2,95.6 119.2,100.4 119.2,105.2 119.2,109.9 119.1,114.7 119.1,119.5 119,124.3 119,129.1 119,133.8 118.9,138.6 118.9,143.4 118.8,148.2 118.7,153 118.7,157.7 118.6,162.5 118.5,167.3 118.5,172.1 118.4,176.9 118.3,181.6 118.2,186.4 118.1,191.2 118,196 117.9,200.8 117.7,205.5 117.6,210.3 117.5,215.1 117.3,219.9 117.1,224.7 116.9,229.4 116.7,234.2 116.5,239 116.2,243.8 115.9,248.6 115.6,253.3 115.3,258.1 114.9,262.9 114.7,265.2 114.4,267.7 113.8,272.5 113.1,277.2 112.3,282 111.4,286.8 110.3,291.6 109.9,293.2 108.4,296.4 105.7,301.1 105.2,302 100.4,301.2 100.4,301.1 98,296.4 95.6,291.6 95.6,291.5 94.6,286.8 93.5,282 92.6,277.2 91.7,272.5 90.8,267.7 90.8,267.6 90.3,262.9 89.9,258.1 89.5,253.3 89.1,248.6 88.7,243.8 88.4,239 88.1,234.2 87.8,229.4 87.5,224.7 87.2,219.9 87,215.1 86.8,210.3 86.6,205.5 86.4,200.8 86.2,196 86,191.2 86,191.1 85.9,186.4 85.8,181.6 85.8,176.9 85.7,172.1 85.6,167.3 85.5,162.5 85.5,157.7 85.4,153 85.3,148.2 85.3,143.4 85.2,138.6 85.2,133.8 85.1,129.1 85.1,124.3 85.1,119.5 85,114.7 85,109.9 85,105.2 84.9,100.4 84.9,95.6 84.9,90.8 84.9,86 84.8,81.3 84.8,76.5 84.8,71.7 84.8,66.9 84.8,62.1 84.7,57.4 84.7,52.6 84.7,47.8 84.7,43 84.7,38.2 84.7,33.5 84.7,28.7 84.7,23.9 84.7,19.1 84.6,14.3 84.6,9.6 84.6,4.8 84.6,0" stroke="#0000ed" stroke-width="0.95" fill="none" stroke-linejoin="round"/>
<path d="M131.5,0 131.5,4.8 131.5,9.6 131.5,14.3 131.5,19.1 131.5,23.9 131.5,28.7 131.4,33.5 131.4,38.2 131.4,43 131.4,47.8 131.4,52.6 131.4,57.4 131.4,62.1 131.4,66.9 131.4,71.7 131.4,76.5 131.4,81.3 131.3,86 131.3,90.8 131.3,95.6 131.3,100.4 131.3,105.2 131.3,109.9 131.3,114.7 131.2,119.5 131.2,124.3 131.2,129.1 131.2,133.8 131.2,138.6 131.1,143.4 131.1,148.2 131.1,153 131.1,157.7 131,162.5 131,167.3 131,172.1 130.9,176.9 130.9,181.6 130.9,186.4 130.8,191.2 130.8,196 130.7,200.8 130.7,205.5 130.6,210.3 130.5,215.1 130.5,219.9 130.4,224.7 130.3,229.4 130.3,234.2 130.2,239 130.1,243.8 130,248.6 129.9,253.3 129.7,258.1 129.6,262.9 129.4,267.7 129.3,272.5 129.1,277.2 129.1,278.2 128.9,282 128.6,286.8 128.3,291.6 128,296.4 127.7,301.1 127.3,305.9 126.8,310.7 126.3,315.5 125.7,320.3 125,325 124.3,329 124.1,329.8 122.9,334.6 121.5,339.4 119.8,344.2 119.5,344.8 117,348.9 114.7,351.9 111.8,353.7 109.9,354.7 105.2,354.4 104,353.7 100.4,351.4 98.5,348.9 95.6,345.2 95.1,344.2 92.9,339.4 90.8,334.7 90.8,334.6 89.4,329.8 88.2,325 86.9,320.3 86,316.5 85.9,315.5 85.1,310.7 84.4,305.9 83.7,301.1 83.1,296.4 82.5,291.6 81.9,286.8 81.4,282 81.3,280.2 81,277.2 80.7,272.5 80.4,267.7 80.1,262.9 79.9,258.1 79.6,253.3 79.4,248.6 79.2,243.8 79,239 78.9,234.2 78.7,229.4 78.5,224.7 78.4,219.9 78.3,215.1 78.1,210.3 78,205.5 77.9,200.8 77.8,196 77.7,191.2 77.7,186.4 77.6,181.6 77.5,176.9 77.4,172.1 77.4,167.3 77.3,162.5 77.3,157.7 77.2,153 77.2,148.2 77.1,143.4 77.1,138.6 77.1,133.8 77,129.1 77,124.3 77,119.5 76.9,114.7 76.9,109.9 76.9,105.2 76.9,100.4 76.8,95.6 76.8,90.8 76.8,86 76.8,81.3 76.8,76.5 76.8,71.7 76.7,66.9 76.7,62.1 76.7,57.4 76.7,52.6 76.7,47.8 76.7,43 76.7,38.2 76.7,33.5 76.7,28.7 76.7,23.9 76.7,19.1 76.6,14.3 76.6,9.6 76.6,4.8 76.6,0" stroke="#0086ff" stroke-width="0.95" fill="none" stroke-linejoin="round"/>
<path d="M141.2,0 141.2,4.8 141.2,9.6 141.2,14.3 141.2,19.1 141.2,23.9 141.2,28.7 141.2,33.5 141.2,38.2 141.2,43 141.2,47.8 141.2,52.6 141.1,57.4 141.1,62.1 141.1,66.9 141.1,71.7 141.1,76.5 141.1,81.3 141.1,86 141.1,90.8 141.1,95.6 141.1,100.4 141.1,105.2 141.1,109.9 141,114.7 141,119.5 141,124.3 141,129.1 141,133.8 141,138.6 141,143.4 141,148.2 141,153 140.9,157.7 140.9,162.5 140.9,167.3 140.9,172.1 140.9,176.9 140.9,181.6 140.8,186.4 140.8,191.2 140.8,196 140.8,200.8 140.8,205.5 140.7,210.3 140.7,215.1 140.7,219.9 140.7,224.7 140.6,229.4 140.6,234.2 140.6,239 140.5,243.8 140.5,248.6 140.5,253.3 140.4,258.1 140.4,262.9 140.3,267.7 140.3,272.5 140.2,277.2 140.2,282 140.1,286.8 140,291.6 139.9,296.4 139.8,301.1 139.7,305.9 139.6,310.7 139.4,315.5 139.3,320.3 139,325 138.8,329.8 138.6,332.1 138.4,334.6 138,339.4 137.5,344.2 136.9,348.9 136.1,353.7 135,358.5 133.8,362.8 133.7,363.3 131.8,368.1 129.2,372.8 129.1,373.1 125,377.6 124.3,378.2 119.5,380.9 114.7,381.9 109.9,381.5 105.2,379.7 102,377.6 100.4,376.5 96.9,372.8 95.6,371.4 93.4,368.1 90.8,363.9 90.5,363.3 88.5,358.5 86.5,353.7 86,352.6 85,348.9 83.7,344.2 82.4,339.4 81.3,334.7 81.2,334.6 80.4,329.8 79.6,325 78.9,320.3 78.2,315.5 77.6,310.7 77,305.9 76.5,301.2 76.5,301.1 76.1,296.4 75.7,291.6 75.4,286.8 75.1,282 74.8,277.2 74.5,272.5 74.3,267.7 74,262.9 73.8,258.1 73.6,253.3 73.4,248.6 73.3,243.8 73.1,239 73,234.2 72.8,229.4 72.7,224.7 72.6,219.9 72.5,215.1 72.4,210.3 72.3,205.5 72.2,200.8 72.1,196 72.1,191.2 72,186.4 71.9,181.6 71.9,176.9 71.8,172.1 71.8,167.3 71.7,162.5 71.7,158.5 71.7,157.7 71.7,153 71.6,148.2 71.6,143.4 71.6,138.6 71.6,133.8 71.5,129.1 71.5,124.3 71.5,119.5 71.5,114.7 71.5,109.9 71.5,105.2 71.4,100.4 71.4,95.6 71.4,90.8 71.4,86 71.4,81.3 71.4,76.5 71.4,71.7 71.4,66.9 71.4,62.1 71.3,57.4 71.3,52.6 71.3,47.8 71.3,43 71.3,38.2 71.3,33.5 71.3,28.7 71.3,23.9 71.3,19.1 71.3,14.3 71.3,9.6 71.3,4.8 71.3,0" stroke="#1fffe0" stroke-width="0.95" fill="none" stroke-linejoin="round"/>
<path d="M150,0 150,4.8 150,9.6 150,14.3 150,19.1 150,23.9 150,28.7 149.9,33.5 149.9,38.2 149.9,43 149.9,47.8 149.9,52.6 149.9,57.4 149.9,62.1 149.9,66.9 149.9,71.7 149.9,76.5 149.9,81.3 149.9,86 149.9,90.8 149.9,95.6 149.9,100.4 149.9,105.2 149.9,109.9 149.9,114.7 149.9,119.5 149.9,124.3 149.9,129.1 149.9,133.8 149.8,138.6 149.8,143.4 149.8,148.2 149.8,153 149.8,157.7 149.8,162.5 149.8,167.3 149.8,172.1 149.8,176.9 149.8,181.6 149.8,186.4 149.8,191.2 149.8,196 149.8,200.8 149.8,205.5 149.8,210.3 149.8,215.1 149.8,219.9 149.8,224.7 149.9,229.4 149.9,234.2 149.9,239 149.9,243.8 149.9,248.6 149.9,253.3 150,258.1 150,262.9 150,267.7 150.1,272.5 150.1,277.2 150.2,282 150.2,286.8 150.3,291.6 150.3,296.4 150.4,301.1 150.5,305.9 150.5,310.7 150.6,315.5 150.7,320.3 150.8,325 150.9,329.8 150.9,334.6 151,339.4 151,344.2 151,348.9 151,353.7 150.8,358.5 150.6,363.3 150.2,368.1 149.6,372.8 148.6,377.6 148.2,379.2 147.1,382.4 144.9,387.2 143.4,389.4 141.4,392 138.6,394.4 135.2,396.7 133.8,397.5 129.1,399.2 124.3,400.1 119.5,400.2 114.7,399.7 109.9,398.3 106.3,396.7 105.2,396.2 100.4,393 99.2,392 95.6,388.6 94.5,387.2 90.8,382.5 90.8,382.4 88.1,377.6 86,373.9 85.6,372.8 83.7,368.1 81.9,363.3 81.3,361.5 80.4,358.5 79.2,353.7 78,348.9 76.9,344.2 76.5,342.1 76,339.4 75.3,334.6 74.6,329.8 73.9,325 73.3,320.3 72.8,315.5 72.2,310.7 71.8,305.9 71.7,305.2 71.4,301.1 71.1,296.4 70.8,291.6 70.5,286.8 70.2,282 70,277.2 69.7,272.5 69.5,267.7 69.4,262.9 69.2,258.1 69,253.3 68.9,248.6 68.7,243.8 68.6,239 68.5,234.2 68.4,229.4 68.3,224.7 68.2,219.9 68.1,215.1 68,210.3 67.9,205.5 67.9,200.8 67.8,196 67.7,191.2 67.7,186.4 67.6,181.6 67.6,176.9 67.5,172.1 67.5,167.3 67.5,162.5 67.4,157.7 67.4,153 67.4,148.2 67.3,143.4 67.3,138.6 67.3,133.8 67.3,129.1 67.2,124.3 67.2,119.5 67.2,114.7 67.2,109.9 67.2,105.2 67.2,100.4 67.1,95.6 67.1,90.8 67.1,86 67.1,81.3 67.1,76.5 67.1,71.7 67.1,66.9 67.1,62.1 67.1,57.4 67.1,52.6 67,47.8 67,43 67,38.2 67,33.5 67,28.7 67,23.9 67,19.1 67,14.3 67,9.6 67,4.8 67,0" stroke="#b6ff49" stroke-width="0.95" fill="none" stroke-linejoin="round"/>
<path d="M158.3,0 158.3,4.8 158.3,9.6 158.3,14.3 158.3,19.1 158.2,23.9 158.2,28.7 158.2,33.5 158.2,38.2 158.2,43 158.2,47.8 158.2,52.6 158.2,57.4 158.2,62.1 158.2,66.9 158.2,71.7 158.2,76.5 158.2,81.3 158.2,86 158.2,90.8 158.2,95.6 158.2,100.4 158.2,105.2 158.2,109.9 158.2,114.7 158.2,119.5 158.2,124.3 158.2,129.1 158.2,133.8 158.2,138.6 158.2,143.4 158.2,148.2 158.2,153 158.2,157.7 158.2,162.5 158.2,167.3 158.3,172.1 158.3,176.9 158.3,181.6 158.3,186.4 158.3,191.2 158.3,196 158.4,200.8 158.4,205.5 158.4,210.3 158.4,215.1 158.5,219.9 158.5,224.7 158.6,229.4 158.6,234.2 158.7,239 158.7,243.8 158.8,248.6 158.9,253.3 159,258.1 159.1,262.9 159.2,267.7 159.3,272.5 159.4,277.2 159.6,282 159.7,286.8 159.9,291.6 160.1,296.4 160.4,301.1 160.6,305.9 160.9,310.7 161.2,315.5 161.5,320.3 161.9,325 162.3,329.8 162.5,332.2 162.7,334.6 163.2,339.4 163.8,344.2 164.3,348.9 164.9,353.7 165.6,358.5 166.2,363.3 166.9,368.1 167.3,371.3 167.5,372.8 168.1,377.6 168.5,382.4 168.6,387.2 168.3,392 167.3,396.3 167.2,396.7 164.8,401.5 162.5,404.1 160.1,406.3 157.7,407.8 153,410.3 150.9,411.1 148.2,411.9 143.4,413.1 138.6,413.8 133.8,414.3 129.1,414.3 124.3,414 119.5,413.3 114.7,412.2 111.3,411.1 109.9,410.6 105.2,408.3 101.9,406.3 100.4,405.3 95.8,401.5 95.6,401.3 91.4,396.7 90.8,396 88,392 86,389 85.1,387.2 82.7,382.4 81.3,379.3 80.6,377.6 78.9,372.8 77.4,368.1 76.5,365.2 76,363.3 74.9,358.5 73.8,353.7 72.8,348.9 71.9,344.2 71.7,342.8 71.2,339.4 70.6,334.6 70,329.8 69.4,325 68.9,320.3 68.5,315.5 68,310.7 67.6,305.9 67.3,301.1 66.9,296.4 66.9,296.2 66.7,291.6 66.4,286.8 66.2,282 66,277.2 65.8,272.5 65.6,267.7 65.5,262.9 65.3,258.1 65.2,253.3 65.1,248.6 65,243.8 64.8,239 64.7,234.2 64.7,229.4 64.6,224.7 64.5,219.9 64.4,215.1 64.3,210.3 64.3,205.5 64.2,200.8 64.2,196 64.1,191.2 64.1,186.4 64,181.6 64,176.9 64,172.1 63.9,167.3 63.9,162.5 63.9,157.7 63.8,153 63.8,148.2 63.8,143.4 63.8,138.6 63.7,133.8 63.7,129.1 63.7,124.3 63.7,119.5 63.7,114.7 63.7,109.9 63.7,105.2 63.6,100.4 63.6,95.6 63.6,90.8 63.6,86 63.6,81.3 63.6,76.5 63.6,71.7 63.6,66.9 63.6,62.1 63.6,57.4 63.6,52.6 63.6,47.8 63.5,43 63.5,38.2 63.5,33.5 63.5,28.7 63.5,23.9 63.5,19.1 63.5,14.3 63.5,9.6 63.5,4.8 63.5,0" stroke="#ffb000" stroke-width="0.95" fill="none" stroke-linejoin="round"/>
<path d="M166.3,0 166.3,4.8 166.3,9.6 166.3,14.3 166.3,19.1 166.3,23.9 166.3,28.7 166.3,33.5 166.3,38.2 166.3,43 166.3,47.8 166.3,52.6 166.3,57.4 166.3,62.1 166.3,66.9 166.3,71.7 166.3,76.5 166.3,81.3 166.3,86 166.3,90.8 166.3,95.6 166.3,100.4 166.3,105.2 166.3,109.9 166.3,114.7 166.3,119.5 166.3,124.3 166.3,129.1 166.3,133.8 166.3,138.6 166.3,143.4 166.3,148.2 166.4,153 166.4,157.7 166.4,162.5 166.4,167.3 166.4,172.1 166.5,176.9 166.5,181.6 166.5,186.4 166.5,191.2 166.6,196 166.6,200.8 166.7,205.5 166.7,210.3 166.8,215.1 166.9,219.9 166.9,224.7 167,229.4 167.1,234.2 167.2,239 167.3,243 167.3,243.8 167.4,248.6 167.6,253.3 167.7,258.1 167.9,262.9 168.1,267.7 168.3,272.5 168.5,277.2 168.8,282 169.1,286.8 169.4,291.6 169.8,296.4 170.2,301.1 170.6,305.9 171.1,310.7 171.7,315.5 172.1,318.4 172.3,320.3 173,325 173.8,329.8 174.7,334.6 175.7,339.4 176.8,344.2 176.9,344.5 178.1,348.9 179.5,353.7 181.1,358.5 181.6,360.2 182.9,363.3 184.9,368.1 186.4,371.3 187.3,372.8 189.9,377.6 191.2,379.8 192.9,382.4 196,386.8 196.3,387.2 200.2,392 200.8,392.7 204.4,396.7 205.5,398.1 208.9,401.5 210.3,403.4 213.1,406.3 215.1,410.6 215.4,411.1 215.1,411.6 212.5,415.9 210.3,416.7 205.5,418.4 200.8,420 198.5,420.6 196,421.1 191.2,421.9 186.4,422.7 181.6,423.4 176.9,424.1 172.1,424.6 167.3,425.1 164.2,425.4 162.5,425.5 157.7,425.8 153,426 148.2,426.1 143.4,426.1 138.6,425.9 133.8,425.6 132.4,425.4 129.1,425 124.3,424.2 119.5,423.2 114.7,421.8 111.3,420.6 109.9,420.1 105.2,417.8 101.8,415.9 100.4,415 95.6,411.3 95.3,411.1 90.8,406.7 90.5,406.3 86.7,401.5 86,400.6 83.7,396.7 81.3,392.5 81,392 78.9,387.2 76.9,382.4 76.5,381.4 75.3,377.6 73.9,372.8 72.5,368.1 71.7,364.9 71.3,363.3 70.4,358.5 69.5,353.7 68.7,348.9 67.9,344.2 67.2,339.4 66.9,337.1 66.5,334.6 66,329.8 65.6,325 65.3,320.3 64.9,315.5 64.5,310.7 64.2,305.9 63.8,301.1 63.6,296.4 63.3,291.6 63,286.8 62.8,282 62.6,277.2 62.4,272.5 62.2,267.7 62.1,265 62,262.9 61.8,258.1 61.7,253.3 61.5,248.6 61.4,243.8 61.3,239 61.2,234.2 61.1,229.4 61.1,224.7 61,219.9 60.9,215.1 60.9,210.3 60.8,205.5 60.8,200.8 60.7,196 60.7,191.2 60.7,186.4 60.7,181.6 60.6,176.9 60.6,172.1 60.6,167.3 60.6,162.5 60.5,157.7 60.5,153 60.5,148.2 60.5,143.4 60.5,138.6 60.5,133.8 60.5,129.1 60.5,124.3 60.4,119.5 60.4,114.7 60.4,109.9 60.4,105.2 60.4,100.4 60.4,95.6 60.4,90.8 60.4,86 60.4,81.3 60.4,76.5 60.4,71.7 60.4,66.9 60.4,62.1 60.4,57.4 60.4,52.6 60.4,47.8 60.4,43 60.4,38.2 60.4,33.5 60.4,28.7 60.3,23.9 60.3,19.1 60.3,14.3 60.3,9.6 60.3,4.8 60.3,0" stroke="#ff1800" stroke-width="0.95" fill="none" stroke-linejoin="round"/>
<path d="M478,444.5 473.2,444.5 468.4,444.5 463.7,444.5 458.9,444.5 454.1,444.5 449.3,444.5 444.5,444.5 439.8,444.5 435,444.5 430.2,444.5 425.4,444.5 420.6,444.5 415.9,444.5 411.1,444.5 406.3,444.5 401.5,444.5 396.7,444.5 392,444.5 387.2,444.5 382.4,444.5 377.6,444.5 372.8,444.5 368.1,444.5 363.3,444.5 358.5,444.5 353.7,444.5 348.9,444.5 344.2,444.5 339.4,444.5 334.6,444.5 329.8,444.5 325,444.5 320.3,444.5 315.5,444.5 310.7,444.5 305.9,444.5 301.1,444.5 296.4,444.5 291.6,444.5 286.8,444.5 282,444.5 277.2,444.5 272.5,444.5 267.7,444.5 262.9,444.5 258.1,439.8 253.3,439.8 248.6,439.8 243.8,439.8 239,439.8 234.2,439.8 229.4,439.8 224.7,439.8 219.9,439.8 215.1,439.8 210.3,439.8 205.5,439.8 200.8,439.8 196,439.8 191.2,439.8 186.4,439.8 181.6,439.8 176.9,439.8 172.1,439.8 167.3,439.8 162.5,439.8 157.7,439.8 153,439.8 148.2,439.8 143.4,439.8 138.6,435 133.8,435 129.1,435 124.3,435 119.5,435 114.7,430.2 109.9,430.2 105.2,430.2 100.4,425.4 95.6,420.6 90.8,415.9 86,411.1 81.3,406.3 76.5,401.5 76.5,396.7 71.7,392 71.7,387.2 71.7,382.4 66.9,377.6 66.9,372.8 66.9,368.1 66.9,363.3 62.1,358.5 62.1,353.7 62.1,348.9 62.1,344.2 62.1,339.4 62.1,334.6 62.1,329.8 62.1,325 57.4,320.3 57.4,315.5 57.4,310.7 57.4,305.9 57.4,301.1 57.4,296.4 57.4,291.6 57.4,286.8 57.4,282 57.4,277.2 57.4,272.5 57.4,267.7 57.4,262.9 57.4,258.1 57.4,253.3 57.4,248.6 57.4,243.8 57.4,239 57.4,234.2 57.4,229.4 57.4,224.7 57.4,219.9 57.4,215.1 57.4,210.3 57.4,205.5 57.4,200.8 57.4,196 57.4,191.2 57.4,186.4 57.4,181.6 57.4,176.9 57.4,172.1 57.4,167.3 57.4,162.5 57.4,157.7 57.4,153 57.4,148.2 57.4,143.4 57.4,138.6 57.4,133.8 57.4,129.1 57.4,124.3 57.4,119.5 57.4,114.7 57.4,109.9 57.4,105.2 57.4,100.4 57.4,95.6 57.4,90.8 57.4,86 57.4,81.3 57.4,76.5 57.4,71.7 57.4,66.9 57.4,62.1 57.4,57.4 57.4,52.6 57.4,47.8 57.4,43 57.4,38.2 57.4,33.5 57.4,28.7 57.4,23.9 57.4,19.1 57.4,14.3 57.4,9.6 57.4,4.8 57.4,0M176.9,0 176.9,4.8 176.9,9.6 176.9,14.3 176.9,19.1 176.9,23.9 176.9,28.7 176.9,33.5 176.9,38.2 176.9,43 176.9,47.8 176.9,52.6 176.9,57.4 176.9,62.1 176.9,66.9 176.9,71.7 176.9,76.5 176.9,81.3 176.9,86 176.9,90.8 176.9,95.6 176.9,100.4 176.9,105.2 176.9,109.9 176.9,114.7 176.9,119.5 176.9,124.3 176.9,129.1 176.9,133.8 176.9,138.6 176.9,143.4 176.9,148.2 176.9,153 176.9,157.7 176.9,162.5 176.9,167.3 176.9,172.1 176.9,176.9 176.9,181.6 176.9,186.4 176.9,191.2 176.9,196 176.9,200.8 176.9,205.5 176.9,210.3 176.9,215.1 176.9,219.9 176.9,224.7 176.9,229.4 176.9,234.2 176.9,239 176.9,243.8 176.9,248.6 176.9,253.3 176.9,258.1 176.9,262.9 181.6,267.7 181.6,272.5 181.6,277.2 181.6,282 181.6,286.8 181.6,291.6 181.6,296.4 181.6,301.1 181.6,305.9 186.4,310.7 186.4,315.5 186.4,320.3 186.4,325 186.4,329.8 191.2,334.6 191.2,339.4 191.2,344.2 196,348.9 196,353.7 200.8,358.5 205.5,363.3 210.3,368.1 215.1,372.8 219.9,372.8 224.7,377.6 229.4,377.6 234.2,382.4 239,382.4 243.8,382.4 248.6,387.2 253.3,387.2 258.1,387.2 262.9,387.2 267.7,387.2 272.5,387.2 277.2,387.2 282,387.2 286.8,392 291.6,392 296.4,392 301.1,392 305.9,392 310.7,392 315.5,392 320.3,392 325,392 329.8,392 334.6,392 339.4,392 344.2,392 348.9,392 353.7,392 358.5,392 363.3,392 368.1,392 372.8,392 377.6,392 382.4,392 387.2,392 392,392 396.7,392 401.5,392 406.3,392 411.1,392 415.9,392 420.6,392 425.4,392 430.2,392 435,392 439.8,392 444.5,392 449.3,392 454.1,392 458.9,392 463.7,392 468.4,392 473.2,392 478,392" stroke="#800000" stroke-width="0.95" fill="none" stroke-linejoin="round"/>
<path d="M.5,0V478M0,477.5H478" stroke="#7a1010" stroke-opacity=".75" stroke-width="1" fill="none"/>
<path d="M0.5,478v-4.5M0,477.5h4.5M120,478v-4.5M0,359h4.5M239.5,478v-4.5M0,239.5h4.5M359,478v-4.5M0,120h4.5M477.5,478v-4.5M0,0.5h4.5" stroke="#6a0c0c" stroke-opacity=".95" stroke-width="1" fill="none"/>
<circle cx="312.7" cy="419.3" r="2.4" fill="#000"/>
</svg>
<span class="t tk" style="left:280.7px;top:546.9px;width:40px;text-align:center">0.5</span>
<span class="t tk" style="left:256.3px;top:535.7px;width:40px;text-align:right">0.5</span>
<span class="t tk" style="left:400.2px;top:546.9px;width:40px;text-align:center">1</span>
<span class="t tk" style="left:256.3px;top:416.2px;width:40px;text-align:right">1</span>
<span class="t tk" style="left:519.7px;top:546.9px;width:40px;text-align:center">1.5</span>
<span class="t tk" style="left:256.3px;top:296.7px;width:40px;text-align:right">1.5</span>
<span class="t tk" style="left:639.2px;top:546.9px;width:40px;text-align:center">2</span>
<span class="t tk" style="left:256.3px;top:177.2px;width:40px;text-align:right">2</span>
<span class="t tk" style="left:758.7px;top:546.9px;width:40px;text-align:center">2.5</span>
<span class="t tk" style="left:256.3px;top:57.7px;width:40px;text-align:right">2.5</span>
<span class="t ax" id="t_xl" style="left:440px;top:560.8px;width:200px;text-align:center;letter-spacing:0.000px">A-B bond distance (Å)</span>
<span class="t ax" id="t_yl" style="left:167.4px;top:293.2px;width:200px;text-align:center;transform:rotate(-90deg);letter-spacing:0.000px">B-C bond distance (Å)</span>
</body></html>
